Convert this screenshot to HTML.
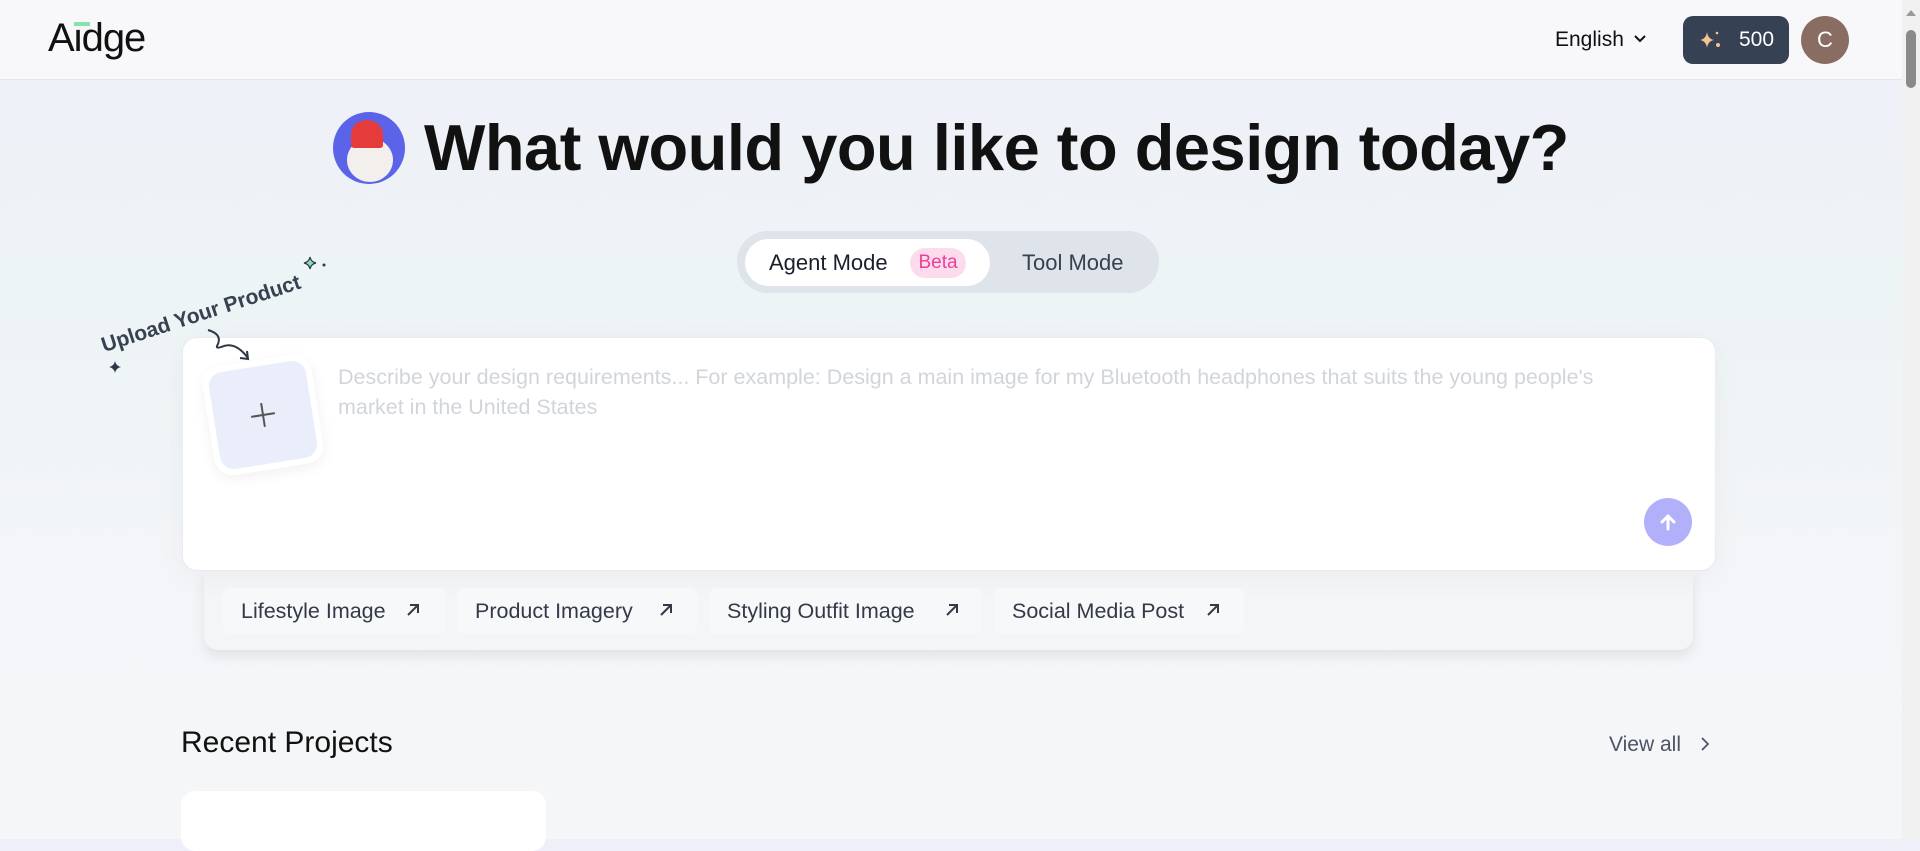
<!DOCTYPE html>
<html><head><meta charset="utf-8"><style>
*{box-sizing:border-box;margin:0;padding:0}
body{width:1920px;height:839px;overflow:hidden;font-family:"Liberation Sans",sans-serif;background:linear-gradient(180deg,#eeeff8 0%,#edf4f5 35%,#f4f5f8 70%,#f5f6f8 100%);position:relative;color:#111}
.hdr{position:absolute;left:0;top:0;width:1902px;height:80px;background:#f8f8fb;border-bottom:1px solid #e5e7eb}
.abs{position:absolute}
.sb{position:absolute;right:0;top:0;width:18px;height:839px;background:#f1f1f1}
.chip{position:absolute;top:588px;height:46px;background:#f7f8fa;border-radius:8px;font-size:21.5px;color:#333a47;line-height:46px;padding-left:18px}
</style></head><body>
<div class="hdr">
 <div class="abs" style="left:48px;top:16px;font-size:40px;font-weight:500;letter-spacing:-1px;color:#111">Aidge</div>
 <div class="abs" style="left:74px;top:22px;width:16px;height:4px;background:#8be0b0"></div>
 <div class="abs" style="left:1555px;top:28px;font-size:21px;color:#111">English</div>
 <svg class="abs" style="left:1633px;top:34px" width="14" height="10"><path d="M2 2l5 5 5-5" stroke="#111" stroke-width="2" fill="none"/></svg>
 <div class="abs" style="left:1683px;top:16px;width:106px;height:48px;background:#364154;border-radius:10px;color:#fff;font-size:21px;line-height:48px;padding-left:56px">500</div>
 <svg class="abs" style="left:1697px;top:28px" width="26" height="24"><path d="M10 4 Q11 11 17 12 Q11 13 10 20 Q9 13 3 12 Q9 11 10 4Z" fill="#f4c48e"/><circle cx="20" cy="5" r="1.3" fill="#f4c48e"/><circle cx="21" cy="17" r="2" fill="#f4c48e"/></svg>
 <div class="abs" style="left:1801px;top:16px;width:48px;height:48px;border-radius:50%;background:#8a6d62;color:#fff;font-size:22px;text-align:center;line-height:48px">C</div>
</div>
<div class="sb"><div style="position:absolute;left:4px;top:30px;width:10px;height:58px;background:#8a8a8a;border-radius:5px"></div><div style="position:absolute;left:4px;top:10px;border:5px solid transparent;border-bottom:6px solid #9a9a9a;border-top:0"></div></div>

<div class="abs" style="left:333px;top:112px;width:72px;height:72px;border-radius:50%;background:#5b64e8;overflow:hidden">
 <div style="position:absolute;left:14px;top:26px;width:46px;height:44px;border-radius:50%;background:#f3efed"></div>
 <div style="position:absolute;left:18px;top:8px;width:32px;height:28px;background:#e63b3b;border-radius:50% 50% 10% 10%"></div>
</div>
<div class="abs" style="left:424px;top:110px;font-size:65px;font-weight:bold;color:#111;letter-spacing:-0.5px">What would you like to design today?</div>

<div class="abs" style="left:737px;top:231px;width:422px;height:62px;background:#dfe3ea;border-radius:31px"></div>
<div class="abs" style="left:745px;top:239px;width:245px;height:47px;background:#fff;border-radius:24px"></div>
<div class="abs" style="left:769px;top:250px;font-size:22px;color:#1a1f2b">Agent Mode</div>
<div class="abs" style="left:910px;top:248px;width:56px;height:30px;background:#fcdcec;border-radius:15px;color:#ec3f97;font-size:19px;text-align:center;line-height:30px">Beta</div>
<div class="abs" style="left:1022px;top:250px;font-size:22px;color:#374151">Tool Mode</div>

<div class="abs" style="left:106px;top:334px;font-size:21px;font-weight:bold;color:#374151;transform:rotate(-18deg);transform-origin:left bottom;white-space:nowrap">Upload Your Product</div>
<svg class="abs" style="left:300px;top:253px" width="30" height="25"><path d="M10 4Q11 9 16 10Q11 11 10 16Q9 11 4 10Q9 9 10 4Z" fill="#8be0b0" stroke="#2d3748" stroke-width="1.2"/><circle cx="24" cy="12" r="1.5" fill="#2d3748"/></svg>
<svg class="abs" style="left:108px;top:360px" width="14" height="14"><path d="M7 1Q8 6 13 7Q8 8 7 13Q6 8 1 7Q6 6 7 1Z" fill="#2d3748"/></svg>

<div class="abs" style="left:204px;top:571px;width:1489px;height:79px;background:#f4f5f7;border-radius:0 0 14px 14px;box-shadow:0 6px 12px rgba(0,0,0,.08)"></div>
<div class="abs" style="left:182px;top:337px;width:1534px;height:234px;background:#fff;border-radius:15px;border:1px solid #e8ebef;box-shadow:0 6px 30px rgba(0,0,0,.04)"></div>
<svg class="abs" style="left:204px;top:326px;z-index:3" width="60" height="40"><path d="M4 4 Q18 8 14 18 Q10 24 20 20 Q32 16 44 32 M36 32l8 1 -1-8" stroke="#2d3748" stroke-width="2" fill="none"/></svg>
<div class="abs" style="left:208px;top:360px;width:110px;height:110px;background:#fff;border-radius:18px;transform:rotate(-9deg);box-shadow:0 4px 14px rgba(0,0,0,.06)">
 <div style="position:absolute;left:6px;top:6px;width:98px;height:98px;background:#eaeefb;border-radius:14px"></div>
 <div style="position:absolute;left:43px;top:54px;width:24px;height:2px;background:#555"></div>
 <div style="position:absolute;left:54px;top:43px;width:2px;height:24px;background:#555"></div>
</div>
<div class="abs" style="left:338px;top:362px;width:1325px;font-size:21.5px;line-height:30px;color:#d1d5db">Describe your design requirements... For example: Design a main image for my Bluetooth headphones that suits the young people's market in the United States</div>
<div class="abs" style="left:1644px;top:498px;width:48px;height:48px;border-radius:50%;background:#b2b0fb"></div>
<svg class="abs" style="left:1656px;top:510px" width="24" height="24"><path d="M12 19V6M6 12l6-6 6 6" stroke="#fff" stroke-width="3" fill="none" stroke-linecap="round" stroke-linejoin="round"/></svg>

<div class="chip" style="left:223px;width:223px">Lifestyle Image</div>
<div class="chip" style="left:457px;width:240px">Product Imagery</div>
<div class="chip" style="left:709px;width:273px">Styling Outfit Image</div>
<div class="chip" style="left:994px;width:250px">Social Media Post</div>
<svg class="abs" style="left:405px;top:602px" width="16" height="16"><path d="M3 13L13 3M5 3h8v8" stroke="#333a47" stroke-width="2" fill="none"/></svg>
<svg class="abs" style="left:658px;top:602px" width="16" height="16"><path d="M3 13L13 3M5 3h8v8" stroke="#333a47" stroke-width="2" fill="none"/></svg>
<svg class="abs" style="left:944px;top:602px" width="16" height="16"><path d="M3 13L13 3M5 3h8v8" stroke="#333a47" stroke-width="2" fill="none"/></svg>
<svg class="abs" style="left:1205px;top:602px" width="16" height="16"><path d="M3 13L13 3M5 3h8v8" stroke="#333a47" stroke-width="2" fill="none"/></svg>

<div class="abs" style="left:181px;top:726px;font-size:30px;color:#111">Recent Projects</div>
<div class="abs" style="left:1609px;top:733px;font-size:21px;color:#4b5563">View all</div>
<svg class="abs" style="left:1700px;top:736px" width="10" height="16"><path d="M2 2l6 6-6 6" stroke="#4b5563" stroke-width="1.8" fill="none"/></svg>
<div class="abs" style="left:181px;top:791px;width:365px;height:60px;background:#fff;border-radius:14px"></div>
</body></html>
